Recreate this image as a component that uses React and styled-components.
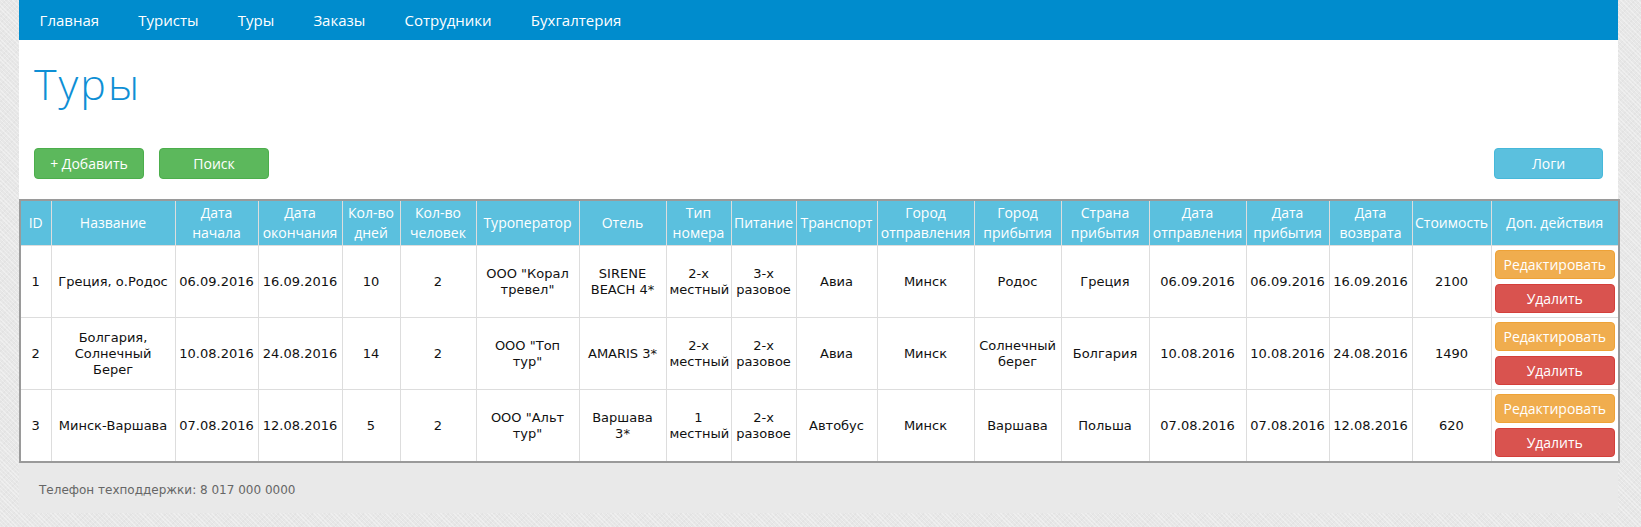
import React from 'react'
import styled, { createGlobalStyle } from 'styled-components'

const GlobalStyle = createGlobalStyle`
    html, body {
        margin: 0;
        padding: 0;
    }
    body {
        min-height: 527px;
        background-color: #e7e7e7;
        background-image:
            repeating-linear-gradient(45deg, rgba(255,255,255,.35) 0 1px, transparent 1px 3px),
            repeating-linear-gradient(-45deg, rgba(0,0,0,.025) 0 1px, transparent 1px 4px);
        font-family: "DejaVu Sans", Verdana, sans-serif;
    }
`

const Page = styled.div`
    width: 1599px;
    margin-left: 19px;
`
const NavBar = styled.nav`
    height: 40px;
    background-color: #008ccd;
    display: flex;
    align-items: center;
    padding-left: 1px;
`
const NavLink = styled.a`
    padding: 0 19.6px;
    color: #fff;
    font-family: "Open Sans", sans-serif;
    font-size: 15px;
    text-decoration: none;
`
const Main = styled.main`
    background-color: #fff;
    padding-top: 21px;
`
const Title = styled.h1`
    margin: 0 15px;
    font-family: "Open Sans", sans-serif;
    font-weight: 300;
    font-size: 43px;
    letter-spacing: 2px;
    line-height: 46px;
    color: #0e8fd5;
`
const Toolbar = styled.div`
    display: flex;
    gap: 15px;
    padding: 0 15px;
    margin: 41px 0 20px;
`
const colors = {
    success: ['#5cb85c', '#4cae4c'],
    info: ['#5bc0de', '#46b8da'],
    warning: ['#f0ad4e', '#eea236'],
    danger: ['#d9534f', '#d43f3a'],
}
const Button = styled.button`
    display: block;
    box-sizing: border-box;
    width: ${p => p.$width || 110}px;
    height: ${p => p.$height || 31}px;
    margin: ${p => p.$push ? '0 0 0 auto' : '0'};
    padding: 0;
    border-radius: 4px;
    border: 1px solid ${p => colors[p.$variant][1]};
    background-color: ${p => colors[p.$variant][0]};
    color: #fff;
    font-family: "Open Sans", sans-serif;
    font-size: 14px;
    cursor: pointer;
`
const Table = styled.table`
    width: 100%;
    table-layout: fixed;
    border-collapse: collapse;
    border: 2px solid #9a9a9a;
`
const Th = styled.th`
    background-color: #5bc0de;
    color: #fff;
    font-family: "Open Sans", sans-serif;
    font-weight: 400;
    font-size: 14px;
    line-height: 20px;
    height: 40px;
    padding: 2px 2px;
    border: 1px solid #ddd;
    white-space: pre-line;
    text-align: center;
    vertical-align: middle;
`
const Td = styled.td`
    color: #111;
    font-size: 13px;
    line-height: 16px;
    padding: 4px 3px;
    border: 1px solid #ddd;
    white-space: pre-line;
    text-align: center;
    vertical-align: middle;
`
const Actions = styled.div`
    display: flex;
    flex-direction: column;
    align-items: center;
    gap: 5px;
`
const Footer = styled.footer`
    box-sizing: border-box;
    height: 50px;
    padding: 20px 0 0 20px;
    background-color: #e9e9e9;
    color: #666;
    font-size: 12px;
    line-height: 15px;
`

const menu = ['Главная', 'Туристы', 'Туры', 'Заказы', 'Сотрудники', 'Бухгалтерия']

const columns = [
    ['ID', 31], ['Название', 124], ['Дата\nначала', 83], ['Дата\nокончания', 84],
    ['Кол-во\nдней', 58], ['Кол-во\nчеловек', 76], ['Туроператор', 103], ['Отель', 87],
    ['Тип\nномера', 65], ['Питание', 65], ['Транспорт', 81], ['Город\nотправления', 97],
    ['Город\nприбытия', 87], ['Страна\nприбытия', 88], ['Дата\nотправления', 97],
    ['Дата\nприбытия', 83], ['Дата\nвозврата', 83], ['Стоимость', 79], ['Доп. действия', 128],
]

const tours = [
    ['1', 'Греция, о.Родос', '06.09.2016', '16.09.2016', '10', '2', 'ООО "Корал\nтревел"', 'SIRENE\nBEACH 4*',
        '2-х\nместный', '3-х\nразовое', 'Авиа', 'Минск', 'Родос', 'Греция', '06.09.2016', '06.09.2016', '16.09.2016', '2100'],
    ['2', 'Болгария,\nСолнечный\nБерег', '10.08.2016', '24.08.2016', '14', '2', 'ООО "Топ\nтур"', 'AMARIS 3*',
        '2-х\nместный', '2-х\nразовое', 'Авиа', 'Минск', 'Солнечный\nберег', 'Болгария', '10.08.2016', '10.08.2016', '24.08.2016', '1490'],
    ['3', 'Минск-Варшава', '07.08.2016', '12.08.2016', '5', '2', 'ООО "Альт\nтур"', 'Варшава\n3*',
        '1\nместный', '2-х\nразовое', 'Автобус', 'Минск', 'Варшава', 'Польша', '07.08.2016', '07.08.2016', '12.08.2016', '620'],
]

const App = () => {
    return (
        <Page>
            <GlobalStyle />
            <NavBar>
                {menu.map(item => <NavLink key={item} href="#">{item}</NavLink>)}
            </NavBar>
            <Main>
                <Title>Туры</Title>
                <Toolbar>
                    <Button $variant="success">+ Добавить</Button>
                    <Button $variant="success">Поиск</Button>
                    <Button $variant="info" $width={109} $push>Логи</Button>
                </Toolbar>
                <Table>
                    <colgroup>
                        {columns.map(([name, w]) => <col key={name} style={{ width: w }} />)}
                    </colgroup>
                    <thead>
                        <tr>
                            {columns.map(([name]) => <Th key={name}>{name}</Th>)}
                        </tr>
                    </thead>
                    <tbody>
                        {tours.map(row => (
                            <tr key={row[0]}>
                                {row.map((cell, i) => <Td key={i}>{cell}</Td>)}
                                <Td>
                                    <Actions>
                                        <Button $variant="warning" $width={120} $height={29}>Редактировать</Button>
                                        <Button $variant="danger" $width={120} $height={29}>Удалить</Button>
                                    </Actions>
                                </Td>
                            </tr>
                        ))}
                    </tbody>
                </Table>
            </Main>
            <Footer>Телефон техподдержки: 8 017 000 0000</Footer>
        </Page>
    )
}
export default App
